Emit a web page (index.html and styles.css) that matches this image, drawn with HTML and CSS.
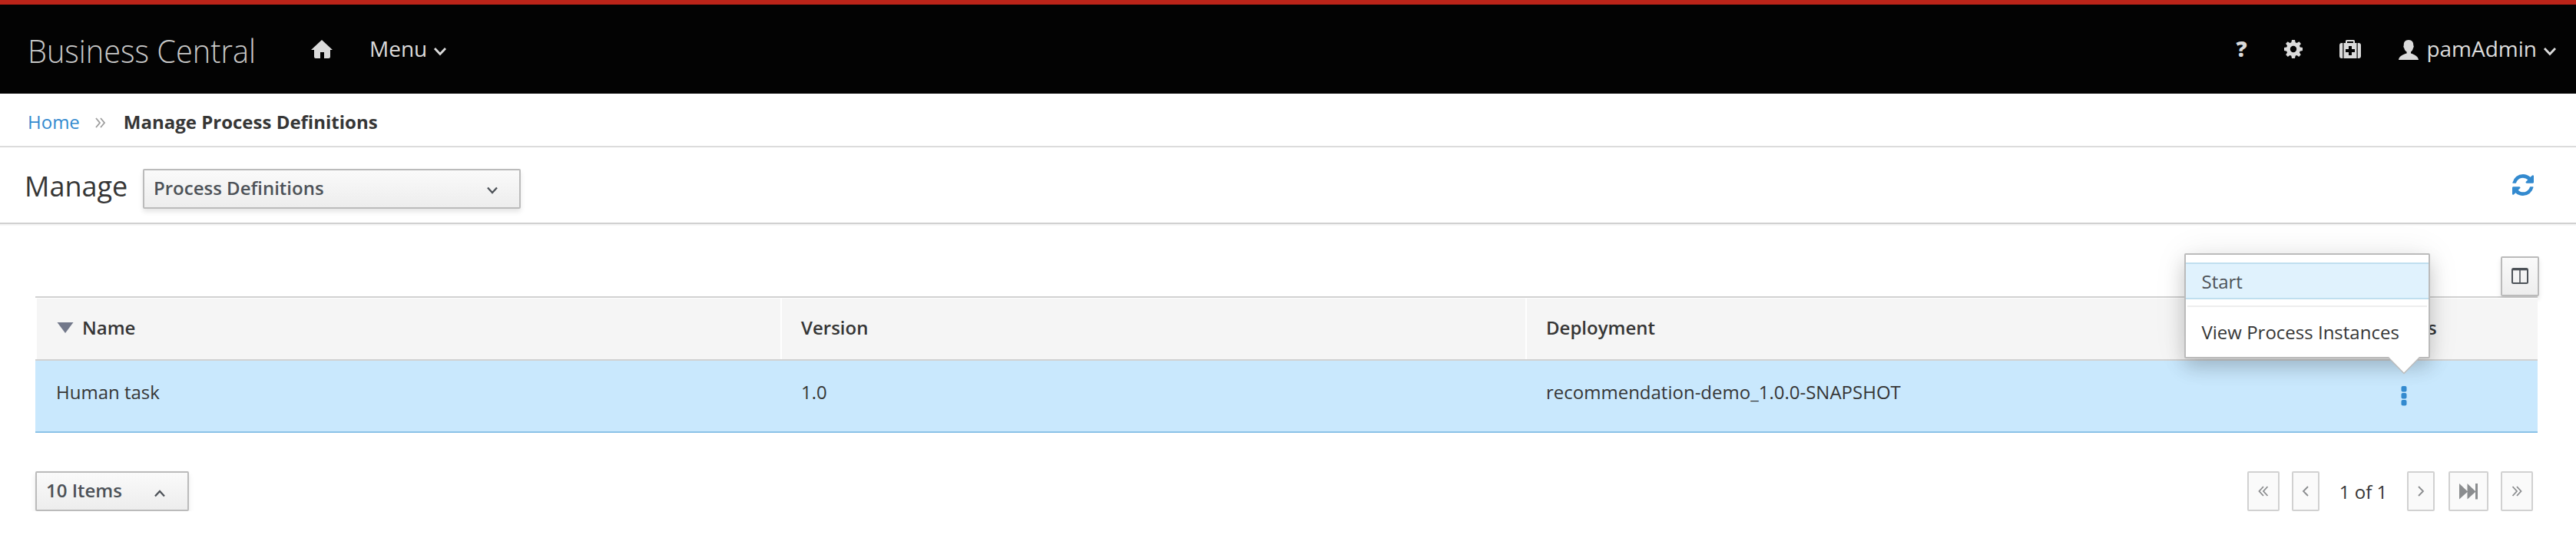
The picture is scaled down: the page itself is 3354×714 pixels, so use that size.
FILE: index.html
```html
<!DOCTYPE html>
<html lang="en">
<head>
<meta charset="utf-8">
<title>Business Central</title>
<link rel="stylesheet" href="styles.css">
</head>
<body>
<header class="masthead">
  <svg class="brand" width="300" height="66" viewBox="0 0 300 66"><text class="brand-text" x="-1" y="48" textLength="297" lengthAdjust="spacingAndGlyphs">Business Central</text></svg>
  <svg class="home" width="28" height="24" viewBox="0 0 28 24"><path d="M14 0 28 13H25V22Q25 24 23 24H17V16H12V24H6Q4 24 4 22V13H0Z"/></svg>
  <div class="menu">Menu<svg class="caret" width="18" height="12" viewBox="0 0 18 12"><path d="M2 2 9 9.500 16 2"/></svg></div>
  <div class="tools">
    <span class="help">?</span>
    <svg class="gear" width="24" height="24" viewBox="0 0 24 24"><path fill-rule="evenodd" d="M10 0h4l.7 3.3 1.9.8L19.400 2.200 22 4.900 20 7.500 20.700 9.400 24 10v4l-3.300.7-.8 1.800L21.800 19.300 19.200 21.900 16.500 20 14.700 20.700 14 24h-4l-.7-3.300L7.500 20 4.800 21.900 2.200 19.200 4 16.500 3.300 14.700 0 14v-4l3.300-.6.7-1.900L2.100 4.800 4.700 2.200 7.400 4.100 9.300 3.300ZM12 7.800a4.200 4.200 0 1 0 0 8.400 4.200 4.200 0 0 0 0-8.400Z"/></svg>
    <svg class="medkit" width="28" height="24" viewBox="0 0 28 24"><path fill-rule="evenodd" d="M8 4V1.500Q8 0 9.500 0h9Q20 0 20 1.500V4h2.500v20h-17V4ZM10 4h8V2h-8ZM12 8v4H8v4h4v4h4v-4h4v-4h-4V8ZM4.300 4v20H3q-3 0-3-3V7q0-3 3-3ZM23.700 4v20H25q3 0 3-3V7q0-3-3-3Z"/></svg>
    <svg class="user" width="26" height="26" viewBox="0 0 26 26"><path d="M13 0C17.500 0 19.500 3 19.300 7.200 20 7.500 19.900 10 19 10.400 18.500 13 17.400 14.500 16 15.600V17.500C20 19 25.500 21 26 26H0C.5 21 6 19 10.600 17.500V15.600C9 14.500 7.700 13 7.200 10.400 6.200 10 6.100 7.500 6.800 7.200 6.500 3 8.500 0 13 0Z"/></svg>
    <span>pamAdmin</span><svg class="caret" width="18" height="12" viewBox="0 0 18 12"><path d="M2 2 9 9.500 16 2"/></svg>
  </div>
</header>
<nav class="breadcrumb">
  <a class="link">Home</a>
  <svg class="sep" width="14" height="14" viewBox="0 0 14 14"><path d="M1 1 6 7 1 13M7 1 12 7 7 13"/></svg>
  <b>Manage Process Definitions</b>
</nav>
<section class="toolbar">
  <h1 class="title">Manage</h1>
  <div class="button select">Process Definitions<svg class="mark" width="14" height="10" viewBox="0 0 14 10"><path d="M1 1.500 7 8 13 1.500"/></svg></div>
  <svg class="refresh" width="28" height="28" viewBox="0 0 1536 1536"><path d="M1511 928q0 5-1 7-64 268-268 434.500T764 1536q-146 0-282.500-55T238 1324l-129 129q-19 19-45 19t-45-19-19-45V960q0-26 19-45t45-19h448q26 0 45 19t19 45-19 45l-137 137q71 66 161 102t187 36q134 0 250-65t186-179q11-17 53-117 8-23 30-23h192q13 0 22.500 9.500t9.500 22.500zm25-800v448q0 26-19 45t-45 19h-448q-26 0-45-19t-19-45 19-45l138-138Q969 256 768 256q-134 0-250 65T332 500q-11 17-53 117-8 23-30 23H50q-13 0-22.500-9.500T18 608v-7q65-268 270-434.500T768 0q146 0 284 55.500T1297 212l130-129q19-19 45-19t45 19 19 45z"/></svg>
</section>
<main class="content">
  <div class="table-tools"><div class="button columns"><svg width="22" height="22" viewBox="0 0 22 22"><rect class="frame" x="1" y="1" width="20" height="19" rx="1.500"/><path class="frame" d="M1 2.300H21"/><path class="split" d="M11 2V20"/></svg></div></div>
  <div class="row head">
    <div class="cell"><svg class="sort" width="22" height="14" viewBox="0 0 22 14"><path d="M.5 0H21.500L11 14Z"/></svg>Name</div>
    <div class="cell">Version</div>
    <div class="cell">Deployment</div>
    <div class="cell center">Actions</div>
  </div>
  <div class="row data">
    <div class="cell">Human task</div>
    <div class="cell">1.0</div>
    <div class="cell">recommendation-demo_1.0.0-SNAPSHOT</div>
    <div class="cell center actions">
      <svg class="kebab" width="8" height="26" viewBox="0 0 8 26"><rect x=".5" y="0" width="7" height="7.500" rx="2"/><rect x=".5" y="9" width="7" height="7.500" rx="2"/><rect x=".5" y="18" width="7" height="7.500" rx="2"/></svg>
      <div class="popup">
        <div class="item active">Start</div>
        <div class="divider"></div>
        <div class="item">View Process Instances</div>
        <svg class="arrow" width="42" height="23" viewBox="0 0 42 23"><path d="M0 0 21 21.500 42 0"/></svg>
      </div>
    </div>
  </div>
  <div class="footer">
    <div class="button items">10 Items<svg class="mark" width="14" height="10" viewBox="0 0 14 10"><path d="M1 8.500 7 2 13 8.500"/></svg></div>
    <div class="pager">
      <div class="page wide"><svg width="14" height="14" viewBox="0 0 14 14"><path d="M7 1 1.500 7 7 13M12.500 1 7 7 12.500 13"/></svg></div>
      <div class="page"><svg width="14" height="14" viewBox="0 0 14 14"><path d="M10 1 4 7 10 13"/></svg></div>
      <span class="count">1 of 1</span>
      <div class="page"><svg width="14" height="14" viewBox="0 0 14 14"><path d="M4 1 10 7 4 13"/></svg></div>
      <div class="page skip"><svg width="24" height="21" viewBox="0 0 24 21"><path class="solid" d="M0 0 10.500 10V0L21 10V0H24V20.500H21V11L10.500 20.500V11L0 20.500Z"/></svg></div>
      <div class="page wide"><svg width="14" height="14" viewBox="0 0 14 14"><path d="M1.500 1 7 7 1.500 13M7 1 12.500 7 7 13"/></svg></div>
    </div>
  </div>
</main>
</body>
</html>
```
FILE: styles.css
```css
* { box-sizing: border-box; }
body {
  margin: 0;
  background: #fff;
  color: #363636;
  font: 24px/34px "Open Sans", "Noto Sans", sans-serif;
  white-space: nowrap;
}
svg { display: block; flex: none; }

.masthead {
  display: flex;
  height: 122px;
  border-top: 6px solid #bb2419;
  background: #030303;
  color: #dbdbdb;
  fill: #dbdbdb;
  font-size: 28px;
  line-height: 38px;
  padding: 0 25px 0 37px;
}
.brand { margin-top: 28px; overflow: visible; }
.brand-text { font-size: 43px; font-weight: 300; fill: #c8c8c8; }
.home { margin: 46px 0 0 68px; }
.menu { display: flex; margin: 38px 0 0 48px; }
.caret { margin: 17px 0 0 8px; fill: none; stroke: #dbdbdb; stroke-width: 2.8; }
.tools { display: flex; margin: 38px 0 0 auto; }
.help { font-weight: 800; width: 17px; margin-right: 46px; }
.gear { margin: 8px 48px 0 0; }
.medkit { margin: 8px 49px 0 0; }
.user { margin: 8px 10px 0 0; }

.breadcrumb {
  display: flex;
  height: 70px;
  padding: 20px 0 0 36px;
  border-bottom: 2px solid #dcdcdc;
}
.link { color: #338acf; }
.sep { margin: 11px 23px 0 20px; fill: none; stroke: #9c9c9c; stroke-width: 1.8; }

.toolbar {
  display: flex;
  height: 102px;
  padding: 28px 55px 0 32px;
  border-bottom: 2px solid #f5f5f5;
  box-shadow: inset 0 -2px #d1d1d1;
}
.title { margin: -2px 0 0; width: 154px; font-size: 36px; font-weight: 400; line-height: 50px; }
.button {
  display: flex;
  height: 52px;
  border: 2px solid #bbb;
  border-radius: 2px;
  background: linear-gradient(#fafafa, #ededed);
  box-shadow: 0 4px 6px rgba(3, 3, 3, .1);
  color: #4d5258;
  font-weight: 600;
}
.select { width: 492px; padding: 6px 28px 0 12px; justify-content: space-between; }
.mark { margin-top: 15px; fill: none; stroke: #4d5258; stroke-width: 2.3; }
.refresh { margin: 7px 0 0 auto; fill: #338acf; }

.content { padding: 40px 50px 0 46px; }
.table-tools { display: flex; justify-content: flex-end; height: 52px; margin-right: -2px; }
.columns { width: 50px; padding-right: 1px; justify-content: center; align-items: center; }
.frame { fill: none; stroke: #4d5258; stroke-width: 2; }
.split { stroke: #4d5258; stroke-width: 1.600; }
.row { display: grid; grid-template-columns: 970px 970px 970px 1fr; }
.head {
  height: 84px;
  border-top: 2px solid #d1d1d1;
  border-bottom: 2px solid #d1d1d1;
  font-weight: 600;
}
.head .cell {
  display: flex;
  padding: 21px 0 0 25px;
  background: #f5f5f5;
  border-top: 1px solid #fff;
  border-left: 2px solid #fff;
}
.head .center { border-left: 0; }
.sort { margin: 10px 11px 0 1px; fill: #72788a; }
.data { height: 94px; background: #c9e8fd; border-bottom: 2px solid #8bc2e7; }
.data .cell { padding: 24px 0 0 27px; }
.head .center, .data .center { display: flex; justify-content: center; padding-left: 0; padding-right: 0; }
.actions { position: relative; }
.kebab { margin-top: 9px; fill: #338acf; }

.popup {
  position: absolute;
  right: 140px;
  bottom: 95px;
  width: 320px;
  height: 137px;
  padding-top: 10px;
  border: 2px solid #bbb;
  border-radius: 2px;
  background: #fff;
  box-shadow: 0 12px 24px rgba(3, 3, 3, .175), 0 0 44px rgba(3, 3, 3, .08);
}
.item { padding: 8px 20.5px; height: 48px; line-height: 34px; }
.active { padding-top: 6px; background: #e0f2fd; border: solid #c0dfef; border-width: 2px 0; color: #4d5258; }
.divider { height: 2px; margin: 8px 2px; background: #ededed; }
.arrow { position: absolute; right: 11px; bottom: -23px; fill: #fff; stroke: #bbb; stroke-width: 1.500; }

.footer { display: flex; justify-content: space-between; margin-top: 50px; }
.items { width: 200px; padding: 6px 29px 0 12px; justify-content: space-between; }
.items .mark { margin-top: 16px; }
.pager { display: flex; margin-right: 6px; }
.page {
  display: flex;
  align-items: center;
  justify-content: center;
  width: 36px;
  height: 52px;
  border: 2px solid #d1d1d1;
  border-radius: 2px;
  background: #fafafa;
  fill: none;
  stroke: #8b8d8f;
  stroke-width: 1.800;
}
.wide { width: 42px; }
.wide:first-child { margin-right: 16px; }
.skip { width: 52px; margin: 0 16px 0 18px; }
.solid { fill: #8b8d8f; stroke: none; }
.count { width: 114px; padding-top: 10px; text-align: center; }
```
